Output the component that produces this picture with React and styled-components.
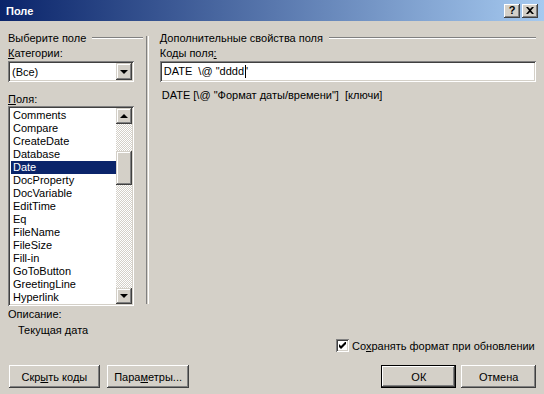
import React from 'react';
import styled, { createGlobalStyle, css } from 'styled-components';

const GlobalStyle = createGlobalStyle`
  html, body {
    margin: 0;
    padding: 0;
    background: #d4d0c8;
  }
  body {
    font-family: 'Liberation Sans', Arial, sans-serif;
    font-size: 11px;
    color: #000;
  }
`;

const sunken = css`
  box-shadow: inset 1px 1px #808080, inset -1px -1px #ffffff,
    inset 2px 2px #404040, inset -2px -2px #d4d0c8;
`;

const raised = css`
  box-shadow: inset -1px -1px #404040, inset 1px 1px #ffffff,
    inset -2px -2px #808080, inset 2px 2px #d4d0c8;
`;

const Window = styled.div`
  width: 544px;
  height: 394px;
  background: #d4d0c8;
  display: flex;
  flex-direction: column;
  overflow: hidden;
`;

const TitleBar = styled.div`
  height: 21px;
  flex: none;
  display: flex;
  align-items: center;
  justify-content: space-between;
  padding: 0 6px;
  background: linear-gradient(to right, #0a246a, #a6caf0);
`;

const Title = styled.span`
  color: #fff;
  font-weight: bold;
  font-size: 11px;
`;

const CaptionButtons = styled.div`
  display: flex;
  gap: 2px;
`;

const CaptionButton = styled.div`
  width: 16px;
  height: 14px;
  background: #d4d0c8;
  ${raised};
  display: flex;
  align-items: center;
  justify-content: center;
  font-weight: bold;
  font-size: 11px;
  line-height: 1;
`;

const Body = styled.div`
  flex: 1;
  display: flex;
  flex-direction: column;
  padding: 10px 8px 0 8px;
`;

const Columns = styled.div`
  display: flex;
  align-items: flex-start;
`;

const Pane = styled.div`
  width: ${(p) => p.width}px;
  display: flex;
  flex-direction: column;
`;

const GroupHeader = styled.div`
  height: 13px;
  display: flex;
  align-items: center;
  gap: 6px;
  white-space: nowrap;

  &::after {
    content: '';
    flex: 1;
    height: 0;
    border-top: 1px solid #808080;
    border-bottom: 1px solid #ffffff;
  }
`;

const Label = styled.div`
  height: 13px;
  line-height: 13px;
  margin-top: ${(p) => p.top || 0}px;
  padding-left: ${(p) => p.indent || 0}px;
  white-space: nowrap;
`;

const Divider = styled.div`
  width: 1px;
  height: 268px;
  margin: 5px 11px 0 3px;
  border-left: 1px solid #808080;
  border-right: 1px solid #ffffff;
`;

const Field = styled.div`
  height: 21px;
  margin-top: 1px;
  background: #fff;
  ${sunken};
  display: flex;
  align-items: center;
  padding: 2px;
  box-sizing: border-box;
`;

const FieldText = styled.span`
  flex: 1;
  padding-left: 2px;
  white-space: pre;
`;

const Caret = styled.span`
  display: inline-block;
  width: 1px;
  height: 13px;
  background: #000;
  vertical-align: middle;
  margin-left: 1px;
`;

const ScrollButton = styled.div`
  width: ${(p) => p.w || 16}px;
  height: ${(p) => p.h || 16}px;
  flex: none;
  background: #d4d0c8;
  box-shadow: inset -1px -1px #404040, inset 1px 1px #d4d0c8,
    inset -2px -2px #808080, inset 2px 2px #ffffff;
  display: flex;
  align-items: center;
  justify-content: center;
`;

const Arrow = styled.span`
  width: 0;
  height: 0;
  border-left: 4px solid transparent;
  border-right: 4px solid transparent;
  ${(p) =>
    p.up
      ? css`border-bottom: 4px solid #000;`
      : css`border-top: 4px solid #000;`}
`;

const ListBox = styled.div`
  height: 200px;
  background: #fff;
  ${sunken};
  padding: 2px;
  box-sizing: border-box;
  display: flex;
`;

const Items = styled.div`
  flex: 1;
  overflow: hidden;
  padding-top: 1px;
`;

const Item = styled.div`
  height: 13px;
  line-height: 13px;
  padding-left: 2px;
  margin-left: 1px;
  white-space: nowrap;
  ${(p) =>
    p.selected &&
    css`
      background: #0a246a;
      color: #fff;
    `}
`;

const ScrollBar = styled.div`
  width: 16px;
  display: flex;
  flex-direction: column;
`;

const Track = styled.div`
  flex: 1;
  background-color: #ffffff;
  background-image: repeating-conic-gradient(#d4d0c8 0% 25%, #ffffff 0% 50%);
  background-size: 2px 2px;
`;

const Thumb = styled(ScrollButton)`
  margin-top: ${(p) => p.offset}px;
`;

const Syntax = styled.div`
  margin-top: 7px;
  padding-left: 2px;
  line-height: 13px;
  white-space: pre;
`;

const Description = styled.div`
  margin-top: 2px;
  display: flex;
  flex-direction: column;
`;

const DescText = styled.div`
  line-height: 15px;
  margin-top: 2px;
  padding-left: 10px;
`;

const CheckRow = styled.label`
  margin-top: 1px;
  margin-left: 328px;
  display: flex;
  align-items: center;
  gap: 3px;
  height: 13px;
  white-space: nowrap;
`;

const CheckBox = styled.span`
  width: 13px;
  height: 13px;
  flex: none;
  background: #fff;
  ${sunken};
  display: flex;
  align-items: center;
  justify-content: center;
`;

const ButtonRow = styled.div`
  margin-top: 13px;
  display: flex;
  align-items: center;
`;

const Button = styled.div`
  width: ${(p) => p.width}px;
  height: 23px;
  margin-left: ${(p) => p.gap || 0}px;
  background: #d4d0c8;
  ${raised};
  display: flex;
  align-items: center;
  justify-content: center;
  box-sizing: border-box;
  white-space: nowrap;
  ${(p) =>
    p.isDefault &&
    css`
      border: 1px solid #000;
    `}
`;

const fields = [
  'Comments', 'Compare', 'CreateDate', 'Database', 'Date', 'DocProperty',
  'DocVariable', 'EditTime', 'Eq', 'FileName', 'FileSize', 'Fill-in',
  'GoToButton', 'GreetingLine', 'Hyperlink',
];

function App() {
  return (
    <Window>
      <GlobalStyle />
      <TitleBar>
        <Title>Поле</Title>
        <CaptionButtons>
          <CaptionButton>?</CaptionButton>
          <CaptionButton>
            <svg width="8" height="7" viewBox="0 0 8 7">
              <path d="M0 0h2l2 2 2-2h2L5 3.5 8 7H6L4 5 2 7H0l3-3.5z" fill="#000" />
            </svg>
          </CaptionButton>
        </CaptionButtons>
      </TitleBar>
      <Body>
        <Columns>
          <Pane width={135}>
            <GroupHeader>Выберите поле</GroupHeader>
            <Label top={3}><u>К</u>атегории:</Label>
            <Field style={{ width: 126 }}>
              <FieldText>(Все)</FieldText>
              <ScrollButton w={16} h={17}><Arrow /></ScrollButton>
            </Field>
            <Label top={11}><u>П</u>оля:</Label>
            <ListBox style={{ width: 126 }}>
              <Items>
                {fields.map((f) => (
                  <Item key={f} selected={f === 'Date'}>{f}</Item>
                ))}
              </Items>
              <ScrollBar>
                <ScrollButton><Arrow up /></ScrollButton>
                <Track>
                  <Thumb offset={27} h={34} />
                </Track>
                <ScrollButton><Arrow /></ScrollButton>
              </ScrollBar>
            </ListBox>
          </Pane>
          <Divider />
          <Pane width={377}>
            <GroupHeader>Дополнительные свойства поля</GroupHeader>
            <Label top={3}>Коды поля<u>:</u></Label>
            <Field>
              <FieldText>DATE  \@ "dddd<Caret />'</FieldText>
            </Field>
            <Syntax>DATE [\@ "Формат даты/времени"]  [ключи]</Syntax>
          </Pane>
        </Columns>
        <Description>
          <Label>Описание:</Label>
          <DescText>Текущая дата</DescText>
        </Description>
        <CheckRow>
          <CheckBox>
            <svg width="7" height="7" viewBox="0 0 7 7">
              <path d="M0 2v3l2 2 5-5V-1L2 4z" fill="#000" />
            </svg>
          </CheckBox>
          <span>Со<u>х</u>ранять формат при обновлении</span>
        </CheckRow>
        <ButtonRow>
          <Button width={91} gap={1}>Скр<u>ы</u>ть коды</Button>
          <Button width={83} gap={7}>Пара<u>м</u>етры...</Button>
          <Button width={75} gap={192} isDefault>ОК</Button>
          <Button width={75} gap={5}>Отмена</Button>
        </ButtonRow>
      </Body>
    </Window>
  );
}

export default App;
